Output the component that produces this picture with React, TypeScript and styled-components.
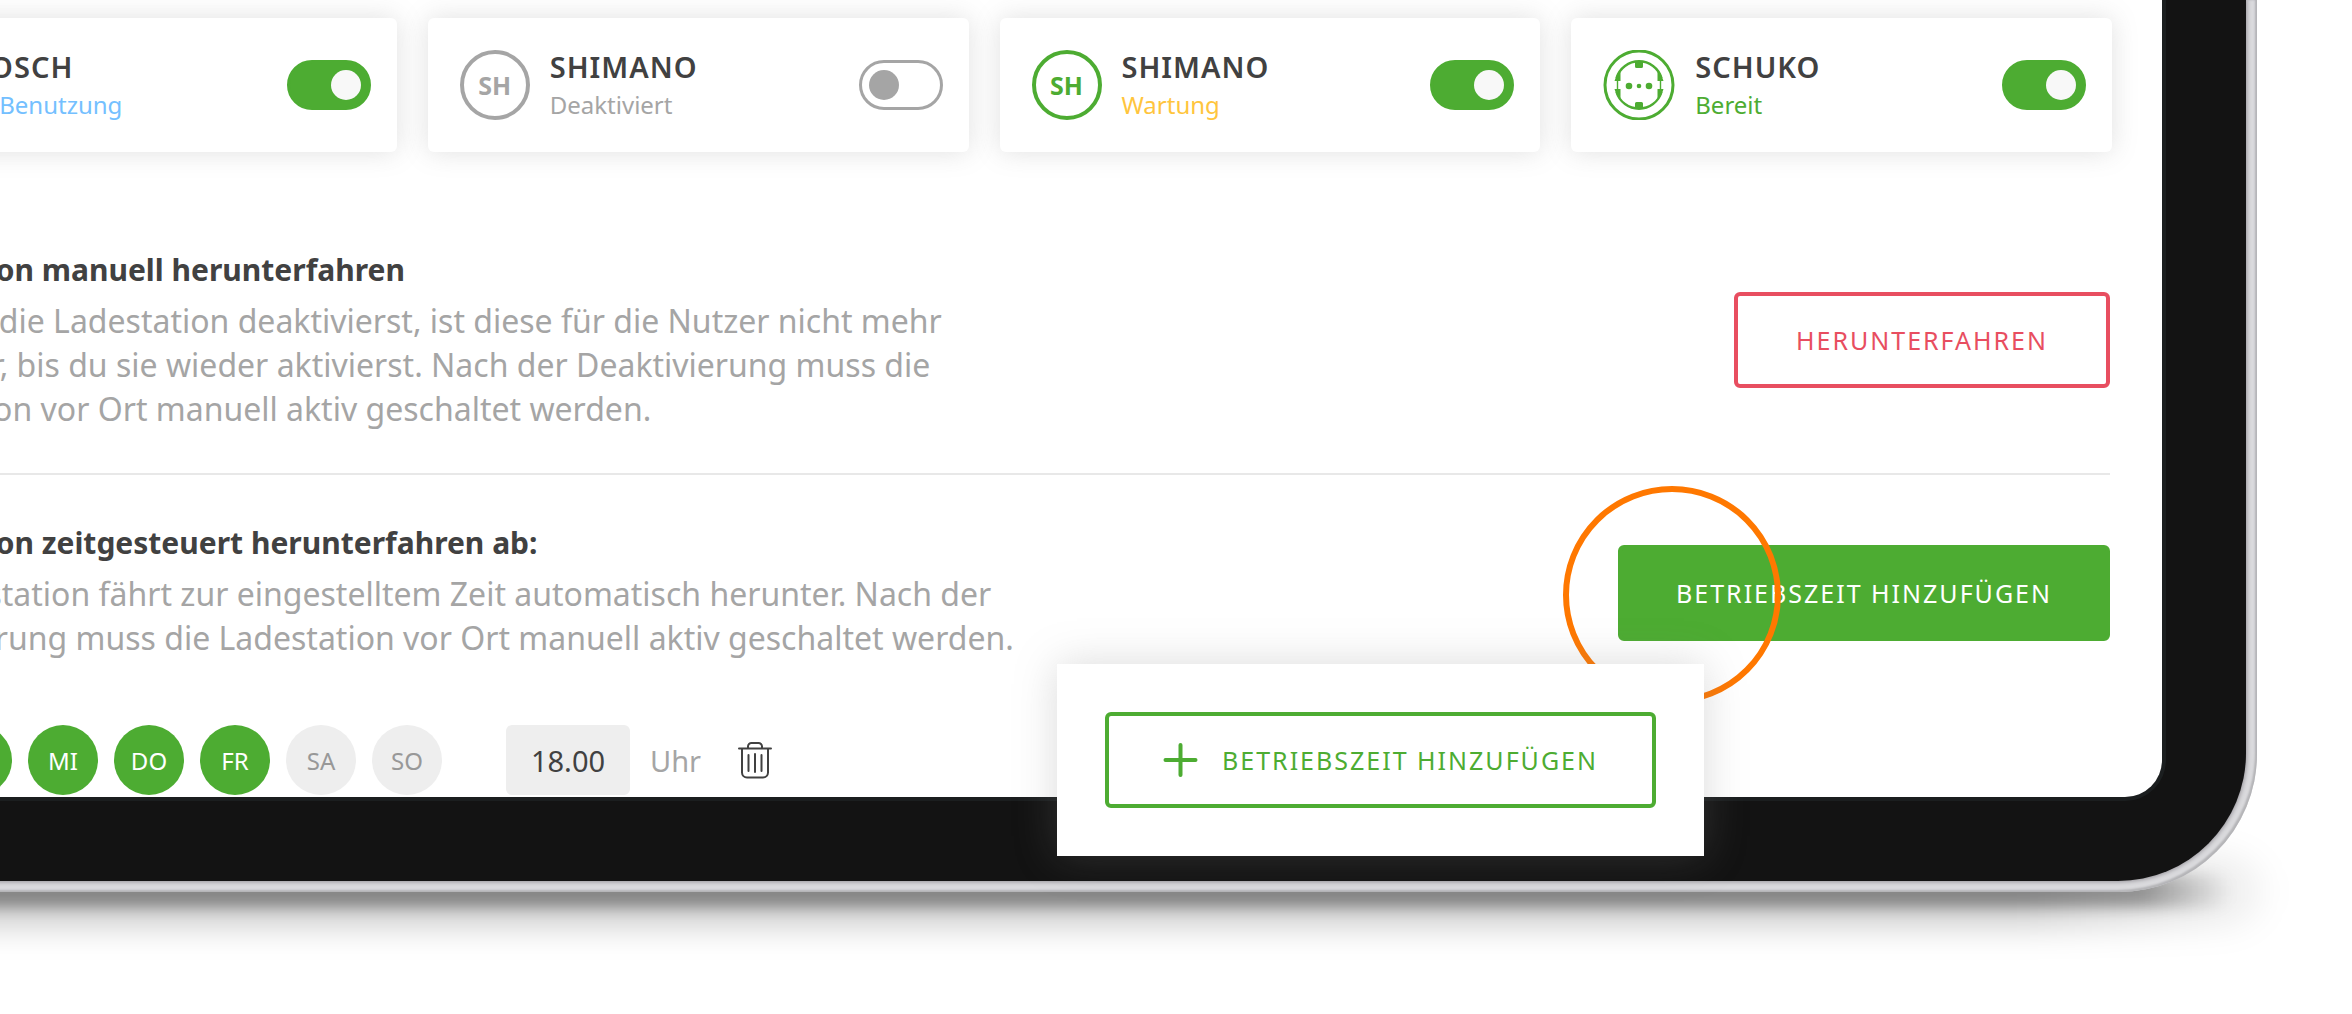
import React, { useState } from "react";
import styled, { createGlobalStyle } from "styled-components";

const green = "#4dac32";
const grey = "#a5a5a5";
const ink = "#414141";
const red = "#e84e60";
const font = `"Noto Sans", "Open Sans", sans-serif`;

const GlobalStyle = createGlobalStyle`
  * { box-sizing: border-box; }
  body { margin: 0; background: #fff; font-family: ${font}; color: ${ink}; }
  button, input { font-family: inherit; margin: 0; }
  h2, h3, p { margin: 0; }
`;

const Page = styled.main`
  overflow: hidden;
  padding: 0 95px 122px 0;
`;

const Stage = styled.div`
  position: relative;
  isolation: isolate;
  margin-left: -287px;
`;

const SoftShadow = styled.div`
  position: absolute;
  z-index: -1;
  left: 0;
  right: -8px;
  bottom: -34px;
  height: 70px;
  border-radius: 35px;
  background: linear-gradient(to left, rgba(0, 0, 0, 0.04), rgba(0, 0, 0, 0.2) 240px);
  filter: blur(16px);
`;

const CoreShadow = styled.div`
  position: absolute;
  z-index: -1;
  left: 60px;
  right: 26px;
  bottom: -15px;
  height: 32px;
  border-radius: 16px;
  background: linear-gradient(to left, transparent, rgba(0, 0, 0, 0.34) 90px);
  filter: blur(7px);
`;

const Frame = styled.div`
  padding: 0 11px 11px;
  border-radius: 0 0 138px 138px;
  background: #dadadd;
  box-shadow: inset -2px -2px 2px #b4b4b7, inset 2px 0 2px #b4b4b7;
`;

const Bezel = styled.div`
  padding: 0 84px 84px;
  border-radius: 0 0 128px 128px;
  background: #131313;
  box-shadow: 0 0 4px 1px #96949a;
`;

const Screen = styled.div`
  display: flex;
  flex-direction: column;
  padding: 18px 50px 2px 48px;
  border-radius: 0 0 37px 37px;
  background: #fff;
  box-shadow: 0 0 0 4px #1b1e1f;
`;

const CardRow = styled.div`
  display: grid;
  grid-template-columns: repeat(4, 1fr);
  gap: 31px;
`;

const Card = styled.article`
  display: flex;
  align-items: center;
  gap: 20px;
  height: 134px;
  padding: 0 26px 0 32px;
  border-radius: 6px;
  background: #fff;
  box-shadow: 0 0 26px rgba(126, 126, 126, 0.24);
`;

const CardText = styled.div`
  flex: 1;
`;

const CardTitle = styled.h2`
  font-size: 29px;
  line-height: 40px;
  font-weight: 600;
  letter-spacing: 1px;
`;

const Status = styled.p<{ $color: string }>`
  font-size: 24px;
  line-height: 36px;
  color: ${(p) => p.$color};
`;

const Badge = styled.span<{ $color: string; $size: number }>`
  display: flex;
  align-items: center;
  justify-content: center;
  width: ${(p) => p.$size}px;
  height: ${(p) => p.$size}px;
  border: 4px solid ${(p) => p.$color};
  border-radius: 50%;
  color: ${(p) => p.$color};
  font-size: 25px;
  font-weight: 700;
`;

const Switch = styled.input`
  appearance: none;
  display: flex;
  align-items: center;
  width: 84px;
  height: 50px;
  padding: 0 7px;
  border: 3px solid ${grey};
  border-radius: 25px;
  background: #fff;
  cursor: pointer;

  &::before {
    content: "";
    width: 30px;
    height: 30px;
    border-radius: 50%;
    background: ${grey};
  }
  &:checked {
    justify-content: flex-end;
    border-color: ${green};
    background: ${green};
  }
  &:checked::before {
    background: #f8f8f8;
  }
`;

const Section = styled.section`
  display: flex;
  justify-content: space-between;
`;

const ManualSection = styled(Section)`
  align-items: center;
  margin-right: 2px;
  padding: 96px 0 42px;
  border-bottom: 2px solid #e8e8e8;
`;

const TimedSection = styled(Section)`
  align-items: flex-end;
  margin-right: 2px;
  padding: 46px 0 65px;
`;

const Copy = styled.div`
  display: grid;
  gap: 7px;
`;

const Heading = styled.h3`
  font-size: 30px;
  line-height: 44px;
  font-weight: 700;
`;

const Paragraph = styled.p`
  font-size: 32px;
  line-height: 44px;
  color: ${grey};
`;

const ActionSlot = styled.div`
  position: relative;
  margin-bottom: 19px;
`;

const Action = styled.button<{ $color: string; $filled?: boolean }>`
  display: flex;
  align-items: center;
  justify-content: center;
  gap: 24px;
  min-width: 376px;
  height: 96px;
  padding: 0 54px;
  border: 4px solid ${(p) => p.$color};
  border-radius: 6px;
  background: ${(p) => (p.$filled ? p.$color : "#fff")};
  color: ${(p) => (p.$filled ? "#fff" : p.$color)};
  font-size: 25px;
  letter-spacing: 2px;
  white-space: nowrap;
  cursor: pointer;
`;

const Highlight = styled.span`
  position: absolute;
  top: -59px;
  left: -55px;
  width: 218px;
  height: 218px;
  border: 6px solid #ff7800;
  border-radius: 50%;
  pointer-events: none;
`;

const Schedule = styled.div`
  display: flex;
  align-items: center;
`;

const Days = styled.div`
  display: flex;
  gap: 16px;
  margin-right: 64px;
`;

const Day = styled.button<{ $on: boolean }>`
  width: 70px;
  height: 70px;
  padding: 0;
  border: 0;
  border-radius: 50%;
  background: ${(p) => (p.$on ? green : "#eeeeee")};
  color: ${(p) => (p.$on ? "#fff" : "#989898")};
  font-size: 24px;
  cursor: pointer;
`;

const TimeField = styled.label`
  display: flex;
  align-items: center;
  gap: 20px;
  margin-right: 37px;
  font-size: 29px;
  color: ${grey};
`;

const TimeInput = styled.input`
  width: 124px;
  height: 70px;
  padding: 0;
  border: 0;
  border-radius: 6px;
  background: #eeeeee;
  color: ${ink};
  font-size: 29px;
  text-align: center;
`;

const IconButton = styled.button`
  display: flex;
  padding: 0;
  border: 0;
  background: none;
  color: ${ink};
  cursor: pointer;
`;

const Popup = styled.aside`
  position: absolute;
  right: 553px;
  bottom: 36px;
  padding: 48px;
  background: #fff;
  box-shadow: 0 0 40px rgba(126, 126, 126, 0.28);
`;

const SchukoIcon = () => (
  <svg width="72" height="70" viewBox="0 0 72 70" fill="none" stroke={green} aria-hidden="true">
    <circle cx="36" cy="35" r="34" strokeWidth="3" />
    <path d="M13.500 28A23.500 23.500 0 0 1 58.500 28M13.500 42A23.500 23.500 0 0 0 58.500 42" strokeWidth="2.400" />
    <path d="M14.500 30v10M57.500 30v10" strokeWidth="1.400" />
    <g fill={green} stroke="none">
      <path d="M32 11h8v5.500a1.500 1.500 0 0 1-1.500 1.500h-5a1.500 1.500 0 0 1-1.500-1.500zM32 59h8v-5.500a1.500 1.500 0 0 0-1.500-1.500h-5a1.500 1.500 0 0 0-1.500 1.500z" />
      <path d="M16 22h1.500v9h-6q1-5 4.500-9zM16 48h1.500v-9h-6q1 5 4.500 9zM56 22h-1.500v9h6q-1-5-4.500-9zM56 48h-1.500v-9h6q-1 5-4.500 9z" />
      <circle cx="26" cy="36" r="3.300" />
      <circle cx="36" cy="36" r="2.300" />
      <circle cx="46" cy="36" r="3.300" />
    </g>
  </svg>
);

const TrashIcon = () => (
  <svg width="34" height="38" viewBox="0 0 34 38" fill="none" stroke="currentColor" strokeWidth="2" strokeLinecap="round" aria-hidden="true">
    <path d="M1 7.500h32M10 7V5.500A3.500 3.500 0 0 1 13.500 2h7A3.500 3.500 0 0 1 24 5.500V7M4 8v23.500a5 5 0 0 0 5 5h16a5 5 0 0 0 5-5V8" />
    <path d="M10.500 14v16M17 13v18M23.500 14v16" />
  </svg>
);

const PlusIcon = () => (
  <svg width="35" height="34" viewBox="0 0 35 34" fill="none" stroke="currentColor" strokeWidth="4" strokeLinecap="round" aria-hidden="true">
    <path d="M17.500 2v30M2.500 17h30" />
  </svg>
);

const chargers = [
  { brand: "BOSCH", short: "BO", size: 62, status: "In Benutzung", color: "#74c0ff", on: true },
  { brand: "SHIMANO", short: "SH", size: 70, status: "Deaktiviert", color: grey, on: false },
  { brand: "SHIMANO", short: "SH", size: 70, status: "Wartung", color: "#ffc53d", on: true },
  { brand: "SCHUKO", short: "", size: 70, status: "Bereit", color: green, on: true },
];

function ChargerCard({ brand, short, size, status, color, on }: (typeof chargers)[number]) {
  const [active, setActive] = useState(on);
  return (
    <Card>
      {short ? (
        <Badge $color={active ? green : grey} $size={size}>
          {short}
        </Badge>
      ) : (
        <SchukoIcon />
      )}
      <CardText>
        <CardTitle>{brand}</CardTitle>
        <Status $color={color}>{status}</Status>
      </CardText>
      <Switch
        type="checkbox"
        role="switch"
        aria-label={brand}
        checked={active}
        onChange={(e) => setActive(e.target.checked)}
      />
    </Card>
  );
}

export default function App() {
  const [days, setDays] = useState(["MO", "DI", "MI", "DO", "FR"]);
  const toggleDay = (day: string) =>
    setDays((all) => (all.includes(day) ? all.filter((d) => d !== day) : [...all, day]));

  return (
    <Page>
      <GlobalStyle />
      <Stage>
        <SoftShadow />
        <CoreShadow />
        <Frame>
          <Bezel>
            <Screen>
              <CardRow>
                {chargers.map((c, i) => (
                  <ChargerCard key={i} {...c} />
                ))}
              </CardRow>
              <ManualSection>
                <Copy>
                  <Heading>Ladestation manuell herunterfahren</Heading>
                  <Paragraph>
                    Wenn du die Ladestation deaktivierst, ist diese für die Nutzer nicht mehr
                    <br />
                    verfügbar, bis du sie wieder aktivierst. Nach der Deaktivierung muss die
                    <br />
                    Ladestation vor Ort manuell aktiv geschaltet werden.
                  </Paragraph>
                </Copy>
                <Action $color={red}>HERUNTERFAHREN</Action>
              </ManualSection>
              <TimedSection>
                <Copy>
                  <Heading>Ladestation zeitgesteuert herunterfahren ab:</Heading>
                  <Paragraph>
                    Die Ladestation fährt zur eingestelltem Zeit automatisch herunter. Nach der
                    <br />
                    Deaktivierung muss die Ladestation vor Ort manuell aktiv geschaltet werden.
                  </Paragraph>
                </Copy>
                <ActionSlot>
                  <Action $color={green} $filled>
                    BETRIEBSZEIT HINZUFÜGEN
                  </Action>
                  <Highlight />
                </ActionSlot>
              </TimedSection>
              <Schedule>
                <Days>
                  {["MO", "DI", "MI", "DO", "FR", "SA", "SO"].map((day) => (
                    <Day
                      key={day}
                      $on={days.includes(day)}
                      aria-pressed={days.includes(day)}
                      onClick={() => toggleDay(day)}
                    >
                      {day}
                    </Day>
                  ))}
                </Days>
                <TimeField>
                  <TimeInput type="text" defaultValue="18.00" />
                  Uhr
                </TimeField>
                <IconButton aria-label="Löschen">
                  <TrashIcon />
                </IconButton>
              </Schedule>
            </Screen>
          </Bezel>
        </Frame>
        <Popup>
          <Action $color={green}>
            <PlusIcon />
            BETRIEBSZEIT HINZUFÜGEN
          </Action>
        </Popup>
      </Stage>
    </Page>
  );
}
